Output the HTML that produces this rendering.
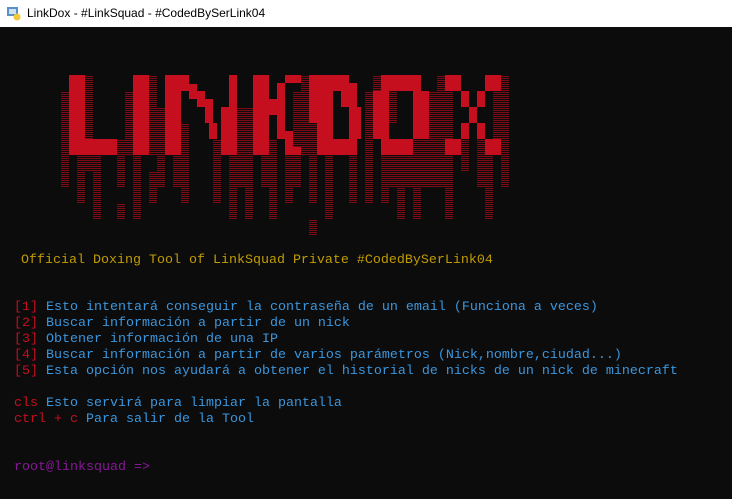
<!DOCTYPE html>
<html><head><meta charset="utf-8"><style>
body{margin:0;width:732px;height:499px;background:#0c0c0c;overflow:hidden;position:relative;font-family:"Liberation Mono",monospace;}
.tb{position:absolute;left:0;top:0;width:732px;height:27px;background:#fff;}
.tb span{position:absolute;left:27px;top:6px;font:12px "Liberation Sans",sans-serif;color:#000;}
.l{position:absolute;left:14px;font-size:13.33px;line-height:16px;white-space:pre;color:#3a96dd;}
.r{color:#c50f1f}.y{color:#c19c00}.p{color:#881798}
</style></head><body>
<div class="tb"><svg width="16" height="16" style="position:absolute;left:6px;top:5px"><rect x="1" y="2" width="11" height="9" fill="#5b8fc7"/><rect x="3" y="4" width="7" height="5" fill="#cfe3f6"/><circle cx="11" cy="12" r="3.5" fill="#f3c83a"/></svg><span>LinkDox - #LinkSquad - #CodedBySerLink04</span></div>
<svg width="732" height="499" style="position:absolute;left:0;top:0">
<defs><pattern id="st" width="24" height="6" patternUnits="userSpaceOnUse"><rect x="0" y="0" width="24" height="3" fill="#7d0b16"/></pattern></defs>
<g transform="translate(50,60) scale(0.33333)">
<g fill="url(#st)">
<rect x="33" y="93" width="24" height="288"/><rect x="81" y="285" width="24" height="144"/><rect x="105" y="45" width="24" height="288"/><rect x="129" y="285" width="24" height="192"/>
<rect x="201" y="237" width="24" height="144"/><rect x="201" y="429" width="24" height="48"/><rect x="225" y="93" width="24" height="192"/><rect x="249" y="285" width="24" height="192"/>
<rect x="297" y="45" width="24" height="240"/><rect x="297" y="333" width="24" height="96"/><rect x="321" y="141" width="24" height="240"/><rect x="369" y="285" width="24" height="96"/>
<rect x="393" y="189" width="24" height="240"/><rect x="489" y="237" width="24" height="192"/><rect x="537" y="285" width="24" height="192"/><rect x="561" y="141" width="24" height="240"/>
<rect x="585" y="141" width="24" height="336"/><rect x="633" y="285" width="24" height="96"/><rect x="657" y="237" width="24" height="240"/><rect x="705" y="285" width="24" height="144"/>
<rect x="729" y="93" width="24" height="288"/><rect x="753" y="45" width="24" height="240"/><rect x="777" y="189" width="24" height="240"/><rect x="777" y="477" width="24" height="48"/>
<rect x="825" y="285" width="24" height="192"/><rect x="897" y="237" width="24" height="192"/><rect x="945" y="93" width="24" height="336"/><rect x="969" y="45" width="24" height="48"/>
<rect x="993" y="285" width="24" height="144"/><rect x="1017" y="93" width="24" height="96"/><rect x="1017" y="285" width="24" height="96"/><rect x="1041" y="285" width="24" height="192"/>
<rect x="1065" y="285" width="24" height="96"/><rect x="1089" y="237" width="24" height="240"/><rect x="1113" y="237" width="24" height="144"/><rect x="1137" y="93" width="24" height="288"/>
<rect x="1161" y="45" width="24" height="336"/><rect x="1185" y="93" width="24" height="384"/><rect x="1233" y="237" width="24" height="96"/><rect x="1281" y="237" width="24" height="144"/>
<rect x="1305" y="285" width="24" height="192"/><rect x="1329" y="93" width="24" height="144"/><rect x="1353" y="45" width="24" height="336"/>
</g>
<g fill="#c50f1f">
<rect x="57" y="45" width="48" height="240"/><rect x="57" y="237" width="144" height="48"/>
<rect x="249" y="45" width="48" height="240"/>
<rect x="345" y="45" width="48" height="240"/><rect x="345" y="45" width="72" height="27"/><rect x="393" y="72" width="48" height="21"/><rect x="417" y="93" width="48" height="24"/><rect x="441" y="117" width="48" height="24"/><rect x="465" y="141" width="24" height="48"/><rect x="477" y="189" width="24" height="48"/><rect x="513" y="141" width="48" height="144"/><rect x="537" y="45" width="24" height="96"/>
<rect x="609" y="45" width="48" height="240"/><rect x="657" y="117" width="48" height="48"/><rect x="681" y="69" width="24" height="168"/><rect x="705" y="45" width="48" height="24"/><rect x="681" y="213" width="48" height="24"/><rect x="705" y="237" width="24" height="48"/><rect x="705" y="261" width="48" height="24"/>
<rect x="777" y="45" width="120" height="48"/><rect x="801" y="45" width="48" height="240"/><rect x="777" y="45" width="24" height="144"/><rect x="849" y="69" width="72" height="24"/><rect x="873" y="93" width="48" height="48"/><rect x="897" y="141" width="36" height="96"/><rect x="801" y="237" width="120" height="48"/><rect x="825" y="213" width="24" height="24"/>
<rect x="993" y="45" width="120" height="48"/><rect x="969" y="93" width="48" height="144"/><rect x="1089" y="93" width="48" height="144"/><rect x="993" y="237" width="96" height="48"/>
<rect x="1185" y="45" width="48" height="48"/><rect x="1233" y="93" width="24" height="48"/><rect x="1257" y="141" width="24" height="48"/><rect x="1281" y="93" width="24" height="48"/><rect x="1305" y="45" width="48" height="48"/><rect x="1233" y="189" width="24" height="48"/><rect x="1281" y="189" width="24" height="48"/><rect x="1185" y="237" width="48" height="48"/><rect x="1305" y="237" width="48" height="48"/>
</g></g></svg>
<div class="l y" style="left:21px;top:253px">Official Doxing Tool of LinkSquad Private #CodedBySerLink04</div>
<div class="l" style="top:300px"><span class="r">[1]</span> Esto intentará conseguir la contraseña de un email (Funciona a veces)
<span class="r">[2]</span> Buscar información a partir de un nick
<span class="r">[3]</span> Obtener información de una IP
<span class="r">[4]</span> Buscar información a partir de varios parámetros (Nick,nombre,ciudad...)
<span class="r">[5]</span> Esta opción nos ayudará a obtener el historial de nicks de un nick de minecraft

<span class="r">cls</span> Esto servirá para limpiar la pantalla
<span class="r">ctrl + c</span> Para salir de la Tool


<span class="p">root@linksquad =&gt;</span></div>
</body></html>
